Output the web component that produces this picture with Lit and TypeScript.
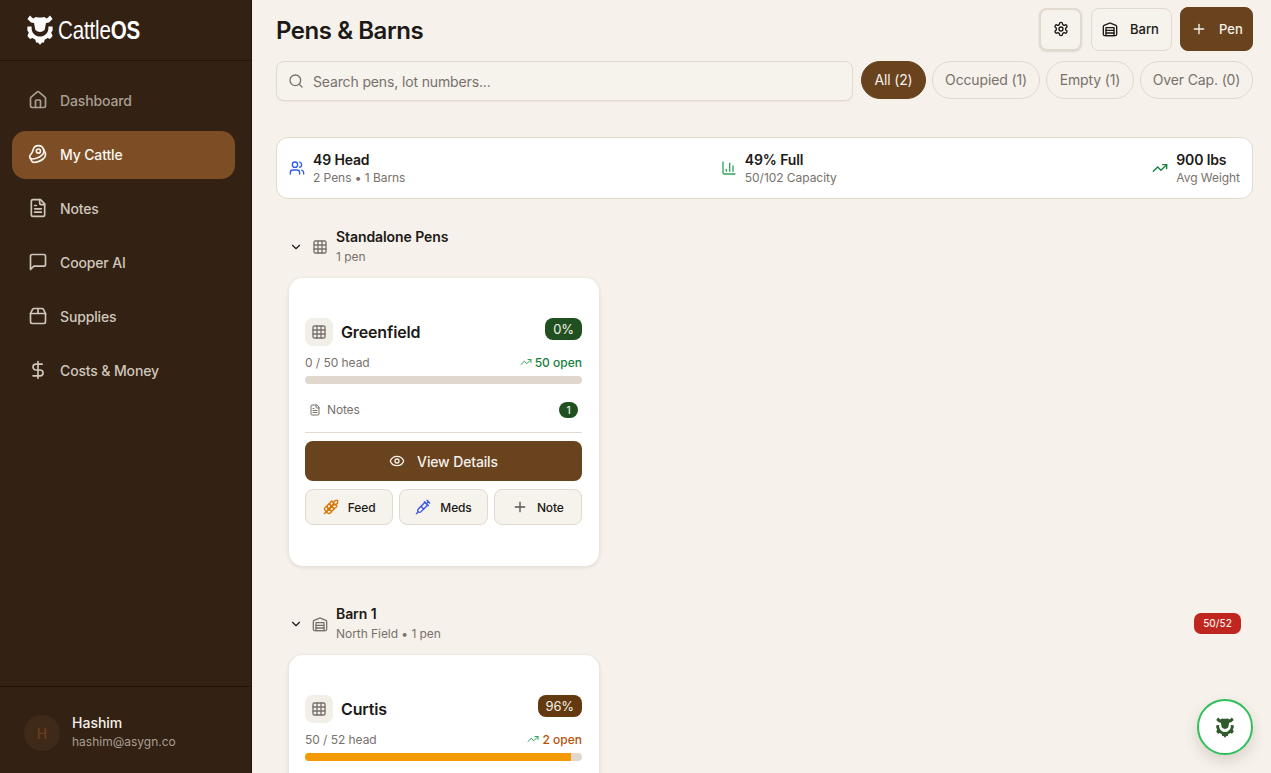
import { LitElement, html, css, svg } from "lit";
import { customElement } from "lit/decorators.js";

const ic = (body: unknown, size = 18, cls = "") =>
  html`<svg class=${cls} width=${size} height=${size} viewBox="0 0 24 24" fill="none" stroke="currentColor" stroke-width="2" stroke-linecap="round" stroke-linejoin="round">${body}</svg>`;

const I = {
  house: svg`<path d="M15 21v-8a1 1 0 0 0-1-1h-4a1 1 0 0 0-1 1v8"/><path d="M3 10a2 2 0 0 1 .709-1.528l7-5.999a2 2 0 0 1 2.582 0l7 5.999A2 2 0 0 1 21 10v9a2 2 0 0 1-2 2H5a2 2 0 0 1-2-2z"/>`,
  beef: svg`<circle cx="12.5" cy="8.5" r="2.5"/><path d="M12.5 2a6.5 6.5 0 0 0-6.22 4.6c-1.1 3.13-.78 3.9-3.18 6.08A3 3 0 0 0 5 18c4 0 8.4-1.8 11.4-4.3A6.5 6.5 0 0 0 12.5 2Z"/><path d="m18.5 6 2.19 4.5a6.48 6.48 0 0 1 .31 2 6.49 6.49 0 0 1-2.6 5.2C15.4 20.2 11 22 7 22a3 3 0 0 1-2.68-1.66L2.4 16.5"/>`,
  file: svg`<path d="M15 2H6a2 2 0 0 0-2 2v16a2 2 0 0 0 2 2h12a2 2 0 0 0 2-2V7Z"/><path d="M14 2v4a2 2 0 0 0 2 2h4"/><path d="M10 9H8"/><path d="M16 13H8"/><path d="M16 17H8"/>`,
  msg: svg`<path d="M21 15a2 2 0 0 1-2 2H7l-4 4V5a2 2 0 0 1 2-2h14a2 2 0 0 1 2 2z"/>`,
  pkg: svg`<path d="M3 9h18v10a2 2 0 0 1-2 2H5a2 2 0 0 1-2-2V9Z"/><path d="m3 9 2.45-4.9A2 2 0 0 1 7.24 3h9.52a2 2 0 0 1 1.8 1.1L21 9"/><path d="M12 3v6"/>`,
  dollar: svg`<line x1="12" x2="12" y1="2" y2="22"/><path d="M17 5H9.5a3.5 3.5 0 0 0 0 7h5a3.5 3.5 0 0 1 0 7H6"/>`,
  gear: svg`<path d="M12.22 2h-.44a2 2 0 0 0-2 2v.18a2 2 0 0 1-1 1.73l-.43.25a2 2 0 0 1-2 0l-.15-.08a2 2 0 0 0-2.73.73l-.22.38a2 2 0 0 0 .73 2.73l.15.1a2 2 0 0 1 1 1.72v.51a2 2 0 0 1-1 1.74l-.15.09a2 2 0 0 0-.73 2.73l.22.38a2 2 0 0 0 2.73.73l.15-.08a2 2 0 0 1 2 0l.43.25a2 2 0 0 1 1 1.73V20a2 2 0 0 0 2 2h.44a2 2 0 0 0 2-2v-.18a2 2 0 0 1 1-1.73l.43-.25a2 2 0 0 1 2 0l.15.08a2 2 0 0 0 2.73-.73l.22-.39a2 2 0 0 0-.73-2.73l-.15-.08a2 2 0 0 1-1-1.74v-.5a2 2 0 0 1 1-1.74l.15-.09a2 2 0 0 0 .73-2.73l-.22-.38a2 2 0 0 0-2.73-.73l-.15.08a2 2 0 0 1-2 0l-.43-.25a2 2 0 0 1-1-1.73V4a2 2 0 0 0-2-2z"/><circle cx="12" cy="12" r="3"/>`,
  barn: svg`<path d="M22 8.35V20a2 2 0 0 1-2 2H4a2 2 0 0 1-2-2V8.35A2 2 0 0 1 3.26 6.5l8-3.2a2 2 0 0 1 1.48 0l8 3.2A2 2 0 0 1 22 8.35Z"/><path d="M6 18h12"/><path d="M6 14h12"/><rect width="12" height="12" x="6" y="10"/>`,
  plus: svg`<path d="M5 12h14"/><path d="M12 5v14"/>`,
  search: svg`<circle cx="11" cy="11" r="8"/><path d="m21 21-4.3-4.3"/>`,
  users: svg`<path d="M16 21v-2a4 4 0 0 0-4-4H6a4 4 0 0 0-4 4v2"/><circle cx="9" cy="7" r="4"/><path d="M22 21v-2a4 4 0 0 0-3-3.87"/><path d="M16 3.13a4 4 0 0 1 0 7.75"/>`,
  chart: svg`<path d="M3 3v16a2 2 0 0 0 2 2h16"/><path d="M18 17V9"/><path d="M13 17V5"/><path d="M8 17v-3"/>`,
  trend: svg`<polyline points="22 7 13.5 15.5 8.5 10.5 2 17"/><polyline points="16 7 22 7 22 13"/>`,
  grid: svg`<rect width="18" height="18" x="3" y="3" rx="2"/><path d="M3 9h18"/><path d="M3 15h18"/><path d="M9 3v18"/><path d="M15 3v18"/>`,
  chev: svg`<path d="m6 9 6 6 6-6"/>`,
  eye: svg`<path d="M2.062 12.348a1 1 0 0 1 0-.696 10.75 10.75 0 0 1 19.876 0 1 1 0 0 1 0 .696 10.75 10.75 0 0 1-19.876 0"/><circle cx="12" cy="12" r="3"/>`,
  wheat: svg`<path d="M2 22 16 8"/><path d="M3.47 12.53 5 11l1.53 1.53a3.5 3.5 0 0 1 0 4.94L5 19l-1.53-1.53a3.5 3.5 0 0 1 0-4.94Z"/><path d="M7.47 8.53 9 7l1.53 1.53a3.5 3.5 0 0 1 0 4.94L9 15l-1.53-1.53a3.5 3.5 0 0 1 0-4.94Z"/><path d="M11.47 4.53 13 3l1.53 1.53a3.5 3.5 0 0 1 0 4.94L13 11l-1.53-1.53a3.5 3.5 0 0 1 0-4.94Z"/><path d="M20 2h2v2a4 4 0 0 1-4 4h-2V6a4 4 0 0 1 4-4Z"/><path d="M11.47 17.47 13 19l-1.53 1.53a3.5 3.5 0 0 1-4.94 0L5 19l1.53-1.53a3.5 3.5 0 0 1 4.94 0Z"/><path d="M15.47 13.47 17 15l-1.53 1.53a3.5 3.5 0 0 1-4.94 0L9 15l1.53-1.53a3.5 3.5 0 0 1 4.94 0Z"/><path d="M19.47 9.47 21 11l-1.53 1.53a3.5 3.5 0 0 1-4.94 0L13 11l1.53-1.53a3.5 3.5 0 0 1 4.94 0Z"/>`,
  syringe: svg`<path d="m18 2 4 4"/><path d="m17 7 3-3"/><path d="M19 9 8.7 19.3c-1 1-2.5 1-3.4 0l-.6-.6c-1-1-1-2.5 0-3.4L15 5"/><path d="m9 11 4 4"/><path d="m5 19-3 3"/><path d="m14 4 6 6"/>`,
};

const cow = (w: number, h: number) => html`<svg width=${w} height=${h} viewBox="0 0 26 30" fill="currentColor">
  <path d="M3 .6 6 3.4 9 2Q13 3 17 2L20 3.4 23 .6 25.6 4 22 7.4 19 8 17.6 15Q13 19 8.4 15L7 8 4 7.4 .4 4Z"/>
  <path d="M.4 11.6 4.6 11.4V14C5.2 18.6 9 21.6 13 21.6S20.8 18.6 21.4 14V11.4L25.6 11.6V15.6L24.2 17.6 25.6 21 23 24 20.6 23 17.6 24.8 17 27.4H15.2L13 29.8 10.8 27.4H9L8.4 24.8 5.4 23 3 24 .4 21 1.8 17.6.4 15.6Z"/>
</svg>`;

@customElement("app-root")
export class AppRoot extends LitElement {
  static styles = css`
    :host {
      display: flex;
      width: 100%;
      height: 100vh;
      overflow: hidden;
      background: #f6f1eb;
      font-family: Inter, "Liberation Sans", sans-serif;
      letter-spacing: -0.14px;
      color: #1c1917;
    }
    * { box-sizing: border-box; }
    svg { display: block; flex: none; }

    .side {
      width: 252px;
      flex: none;
      background: #332114;
      border-right: 1px solid #1f140c;
      display: flex;
      flex-direction: column;
    }
    .brand {
      height: 61px;
      flex: none;
      border-bottom: 1px solid #21150c;
      display: flex;
      align-items: center;
      gap: 5px;
      padding: 0 0 1px 27px;
      color: #fff;
    }
    .brand-text {
      display: inline-block;
      font-family: "Liberation Sans", sans-serif;
      font-size: 26px;
      letter-spacing: -0.2px;
      line-height: 1;
      transform: scaleX(.79);
      transform-origin: left center;
    }
    .brand-text b { font-weight: 700; }
    nav {
      flex: 1;
      display: flex;
      flex-direction: column;
      gap: 6px;
      padding: 16px 16px 16px 12px;
    }
    .nav-item {
      height: 48px;
      display: flex;
      align-items: center;
      gap: 12px;
      padding: 0 16px 2px;
      border-radius: 14px;
      font-size: 14px;
      font-weight: 450;
      color: #cfc7bc;
    }
    .nav-item.muted { color: #a89e92; }
    .nav-item.active {
      background: #7d4e26;
      color: #fbf6f0;
    }
    .user {
      height: 87px;
      flex: none;
      border-top: 1px solid #21150c;
      display: flex;
      align-items: center;
      gap: 12px;
      padding: 6px 24px 0;
    }
    .avatar {
      width: 36px;
      height: 36px;
      border-radius: 50%;
      background: #3f2918;
      color: #6b3f1d;
      display: grid;
      place-items: center;
      font-size: 14px;
      font-weight: 500;
    }
    .u-text { margin-top: -2px; }
    .u-name { font-size: 14px; font-weight: 500; color: #f5f1eb; line-height: 20px; letter-spacing: 0; }
    .u-mail { font-size: 12px; color: #a89e92; line-height: 18px; letter-spacing: 0; }

    main {
      flex: 1;
      min-width: 0;
      display: flex;
      flex-direction: column;
      padding: 7px 18px 0 24px;
      overflow: hidden;
    }
    .top { display: flex; align-items: center; justify-content: space-between; height: 44px; flex: none; }
    h1 { margin: 3px 0 0; font-size: 24px; line-height: 32px; font-weight: 600; color: #1c1917; letter-spacing: -0.45px; }
    .actions { display: flex; align-items: center; gap: 8px; }
    .btn {
      height: 43px;
      display: flex;
      align-items: center;
      gap: 12px;
      border: 1px solid #e2d9cf;
      border-radius: 8px;
      background: #f6f2ec;
      font-size: 13px;
      font-weight: 450;
      letter-spacing: 0;
      color: #1c1917;
      padding: 0 10px;
    }
    .btn.barn { width: 81px; }
    .btn.gear {
      width: 43px;
      justify-content: center;
      padding: 0;
      border-width: 2px;
      box-shadow: 0 1px 2px rgba(60, 40, 20, .12);
      margin-right: 1px;
    }
    .btn.pen {
      width: 73px;
      height: 44px;
      background: #69421e;
      border-color: #69421e;
      color: #f5f1eb;
      padding: 0 0 0 10px;
    }
    .filters { display: flex; gap: 6px; margin-top: 10px; flex: none; align-items: flex-start; }
    .search {
      flex: 1;
      height: 40px;
      margin-right: 2px;
      display: flex;
      align-items: center;
      gap: 9px;
      padding: 0 11px;
      border: 1px solid #e2d9cf;
      border-radius: 8px;
      background: #f6f2ec;
      box-shadow: 0 1px 1px rgba(60, 40, 20, .05);
      font-size: 14px;
      color: #78716c;
    }
    .pill {
      height: 38px;
      padding-bottom: 1px;
      display: flex;
      align-items: center;
      justify-content: center;
      flex: none;
      border: 1px solid #e2d9cf;
      border-radius: 19px;
      font-size: 14px;
      color: #78716c;
      white-space: nowrap;
    }
    .pill.on { background: #69421e; border-color: #69421e; color: #f5f1eb; }
    .w1 { width: 65px; }
    .w2 { width: 108px; }
    .w3 { width: 88px; }
    .w4 { width: 113px; }

    .stats {
      margin-top: 36px;
      height: 62px;
      flex: none;
      display: flex;
      justify-content: space-between;
      align-items: center;
      background: #fff;
      border: 1px solid #e2d9cf;
      border-radius: 12px;
      padding: 0 12px;
    }
    .stat { display: flex; align-items: center; gap: 8px; }
    .stat-t { font-size: 14px; font-weight: 600; line-height: 20px; color: #1c1917; }
    .stat-s { font-size: 12px; line-height: 16px; color: #78716c; letter-spacing: -0.05px; }
    .c-blue { color: #2f5bea; }
    .c-green { color: #2fa35a; }
    .c-dark { color: #15803d; }

    .group { flex: none; padding: 0 12px 10px 13px; }
    .g-head { display: flex; align-items: center; margin-top: 28px; height: 40px; }
    .g-head .chev { margin-right: 9px; color: #1c1917; }
    .g-head .gi { margin-right: 8px; color: #78716c; }
    .g-t { font-size: 14px; font-weight: 600; line-height: 20px; color: #1c1917; letter-spacing: -0.08px; }
    .g-s { font-size: 12px; line-height: 20px; color: #78716c; letter-spacing: -0.05px; }
    .g-head .cnt {
      margin-left: auto;
      margin-top: -2px;
      height: 21px;
      width: 47px;
      border-radius: 7px;
      background: #bf2620;
      color: #fbe9e7;
      font-size: 10px;
      font-weight: 500;
      letter-spacing: 0;
      display: grid;
      place-items: center;
    }
    .card {
      width: 310px;
      margin-top: 11px;
      background: #fff;
      border-radius: 14px;
      padding: 39px 17px 41px 16px;
      box-shadow: 0 1px 4px rgba(70, 50, 30, .14);
    }
    .c-head { display: flex; align-items: center; justify-content: space-between; height: 30px; }
    .c-name { display: flex; align-items: center; gap: 8px; font-size: 16px; font-weight: 600; color: #1c1917; }
    .c-ic {
      width: 28px;
      height: 28px;
      border-radius: 8px;
      background: #f2efe8;
      color: #78716c;
      display: grid;
      place-items: center;
    }
    .badge {
      height: 22px;
      margin-top: -6px;
      padding: 0 8px;
      border-radius: 8px;
      font-size: 13px;
      color: #f5f1eb;
      display: grid;
      place-items: center;
      background: #20501f;
    }
    .badge.brown { background: #63390f; }
    .c-row {
      display: flex;
      justify-content: space-between;
      align-items: center;
      margin-top: 5px;
      height: 20px;
      font-size: 12px;
      color: #78716c;
      letter-spacing: -0.05px;
    }
    .open { display: flex; align-items: center; gap: 3px; color: #15803d; font-weight: 450; letter-spacing: 0; }
    .open svg { color: #2fa35a; }
    .open.warn { color: #b45309; }
    .bar { height: 8px; border-radius: 4px; background: #e0d8ce; margin-top: 4px; overflow: hidden; }
    .fill { height: 100%; background: #f49a02; }
    .notes {
      height: 49px;
      padding: 3px 4px 0;
      border-bottom: 1px solid #e2d9cf;
      display: flex;
      align-items: center;
      gap: 6px;
      font-size: 12px;
      color: #78716c;
    }
    .num {
      margin-left: auto;
      width: 19px;
      height: 16px;
      border-radius: 8px;
      background: #20501f;
      color: #e8efe6;
      font-size: 10px;
      font-weight: 500;
      display: grid;
      place-items: center;
    }
    .view {
      margin-top: 8px;
      height: 40px;
      border-radius: 8px;
      background: #69421e;
      color: #f5f1eb;
      font-size: 14px;
      font-weight: 450;
      display: flex;
      align-items: center;
      justify-content: center;
      gap: 12px;
    }
    .mini { display: grid; grid-template-columns: repeat(3, 1fr); gap: 6px; margin-top: 8px; }
    .m {
      height: 36px;
      border: 1px solid #e2d9cf;
      border-radius: 8px;
      background: #f6f2ec;
      display: flex;
      align-items: center;
      justify-content: center;
      gap: 9px;
      font-size: 12px;
      font-weight: 450;
      color: #1c1917;
    }
    .m .w { color: #d97706; }
    .m .s { color: #3b55e6; }
    .m .p { color: #57534e; }

    .fab {
      position: fixed;
      right: 18px;
      bottom: 18px;
      width: 56px;
      height: 56px;
      border-radius: 50%;
      background: #fff;
      border: 2px solid #2fbf5b;
      color: #2f5a2c;
      display: grid;
      place-items: center;
      box-shadow: 0 6px 14px rgba(70, 50, 30, .16);
    }
  `;

  private nav = [
    ["Dashboard", I.house, "muted"],
    ["My Cattle", I.beef, "active"],
    ["Notes", I.file, ""],
    ["Cooper AI", I.msg, ""],
    ["Supplies", I.pkg, ""],
    ["Costs & Money", I.dollar, ""],
  ] as const;

  render() {
    return html`
      <aside class="side">
        <div class="brand">${cow(26, 30)}<span class="brand-text">Cattle<b>OS</b></span></div>
        <nav>
          ${this.nav.map(([t, i, c]) => html`<div class="nav-item ${c}">${ic(i, 20)}<span>${t}</span></div>`)}
        </nav>
        <div class="user">
          <div class="avatar">H</div>
          <div class="u-text"><div class="u-name">Hashim</div><div class="u-mail">hashim@asygn.co</div></div>
        </div>
      </aside>
      <main>
        <div class="top">
          <h1>Pens &amp; Barns</h1>
          <div class="actions">
            <div class="btn gear">${ic(I.gear, 16)}</div>
            <div class="btn barn">${ic(I.barn, 16)}<span>Barn</span></div>
            <div class="btn pen">${ic(I.plus, 16)}<span>Pen</span></div>
          </div>
        </div>
        <div class="filters">
          <div class="search">${ic(I.search, 16)}<span>Search pens, lot numbers...</span></div>
          <div class="pill on w1">All (2)</div>
          <div class="pill w2">Occupied (1)</div>
          <div class="pill w3">Empty (1)</div>
          <div class="pill w4">Over Cap. (0)</div>
        </div>
        <div class="stats">
          <div class="stat"><span class="c-blue">${ic(I.users, 16)}</span><div><div class="stat-t">49 Head</div><div class="stat-s">2 Pens • 1 Barns</div></div></div>
          <div class="stat"><span class="c-green">${ic(I.chart, 16)}</span><div><div class="stat-t">49% Full</div><div class="stat-s">50/102 Capacity</div></div></div>
          <div class="stat"><span class="c-dark">${ic(I.trend, 16)}</span><div><div class="stat-t">900 lbs</div><div class="stat-s">Avg Weight</div></div></div>
        </div>
        <section class="group">
          <div class="g-head">
            ${ic(I.chev, 14, "chev")}${ic(I.grid, 16, "gi")}
            <div><div class="g-t">Standalone Pens</div><div class="g-s">1 pen</div></div>
          </div>
          <div class="card">
            <div class="c-head">
              <div class="c-name"><span class="c-ic">${ic(I.grid, 16)}</span>Greenfield</div>
              <div class="badge">0%</div>
            </div>
            <div class="c-row"><span>0 / 50 head</span><span class="open">${ic(I.trend, 12)}50 open</span></div>
            <div class="bar"></div>
            <div class="notes">${ic(I.file, 12)}<span>Notes</span><span class="num">1</span></div>
            <div class="view">${ic(I.eye, 16)}<span>View Details</span></div>
            <div class="mini">
              <div class="m">${ic(I.wheat, 16, "w")}<span>Feed</span></div>
              <div class="m">${ic(I.syringe, 16, "s")}<span>Meds</span></div>
              <div class="m">${ic(I.plus, 16, "p")}<span>Note</span></div>
            </div>
          </div>
        </section>
        <section class="group">
          <div class="g-head">
            ${ic(I.chev, 14, "chev")}${ic(I.barn, 16, "gi")}
            <div><div class="g-t">Barn 1</div><div class="g-s">North Field • 1 pen</div></div>
            <div class="cnt">50/52</div>
          </div>
          <div class="card">
            <div class="c-head">
              <div class="c-name"><span class="c-ic">${ic(I.grid, 16)}</span>Curtis</div>
              <div class="badge brown">96%</div>
            </div>
            <div class="c-row"><span>50 / 52 head</span><span class="open warn">${ic(I.trend, 12)}2 open</span></div>
            <div class="bar"><div class="fill" style="width:96%"></div></div>
          </div>
        </section>
      </main>
      <div class="fab">${cow(18, 21)}</div>
    `;
  }
}
